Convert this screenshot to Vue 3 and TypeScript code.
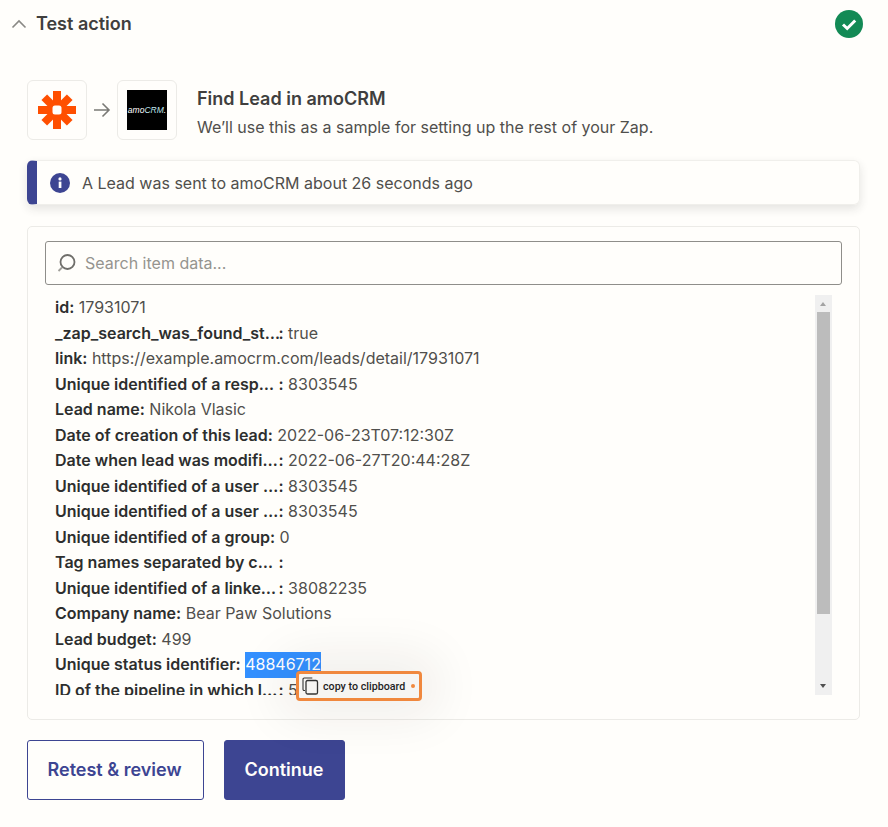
<script setup lang="ts">
interface Row { k: string; v: string; sel?: boolean; cut?: boolean }
const rows: Row[] = [
  { k: 'id', v: '17931071' },
  { k: '_zap_search_was_found_st…', v: 'true', cut: true },
  { k: 'link', v: 'https://example.amocrm.com/leads/detail/17931071' },
  { k: 'Unique identified of a resp…', v: '8303545', cut: true },
  { k: 'Lead name', v: 'Nikola Vlasic' },
  { k: 'Date of creation of this lead', v: '2022-06-23T07:12:30Z' },
  { k: 'Date when lead was modifi…', v: '2022-06-27T20:44:28Z', cut: true },
  { k: 'Unique identified of a user …', v: '8303545', cut: true },
  { k: 'Unique identified of a user …', v: '8303545', cut: true },
  { k: 'Unique identified of a group', v: '0' },
  { k: 'Tag names separated by c…', v: '', cut: true },
  { k: 'Unique identified of a linke…', v: '38082235', cut: true },
  { k: 'Company name', v: 'Bear Paw Solutions' },
  { k: 'Lead budget', v: '499' },
  { k: 'Unique status identifier', v: '48846712', sel: true },
  { k: 'ID of the pipeline in which l…', v: '5', cut: true },
]
</script>

<template>
  <div class="page">
    <header class="head">
      <svg class="chev" width="16" height="10" viewBox="0 0 16 10"><path d="M1.500 8.500 8 2l6.500 6.500" fill="none" stroke="#8a8985" stroke-width="1.600"/></svg>
      <h2 class="head-title">Test action</h2>
      <svg class="ok" width="28" height="28" viewBox="0 0 28 28"><circle cx="14" cy="14" r="14" fill="#138a55"/><path d="M8 14.500l4.200 4L20.200 10.500" fill="none" stroke="#fff" stroke-width="3"/></svg>
    </header>

    <section class="app">
      <div class="tile">
        <svg width="40" height="40" viewBox="0 0 40 40">
          <g fill="#ff4f00">
            <rect x="16" y="1" width="8" height="38" />
            <rect x="1" y="16" width="38" height="8" />
            <rect x="16" y="2" width="8" height="36" transform="rotate(45 20 20)" />
            <rect x="16" y="2" width="8" height="36" transform="rotate(-45 20 20)" />
          </g>
          <rect x="15.500" y="15.500" width="9" height="9" rx="2.500" fill="#fffefb"/>
        </svg>
      </div>
      <svg class="arrow" width="18" height="16" viewBox="0 0 18 16"><path d="M1 8h15M9.500 1.500 16 8l-6.500 6.500" fill="none" stroke="#7a7975" stroke-width="1.600"/></svg>
      <div class="tile">
        <div class="amo"><span class="amo-a">amo</span><span class="amo-b">CRM</span><span class="amo-a">.</span></div>
      </div>
      <div class="app-text">
        <div class="app-title">Find Lead in amoCRM</div>
        <div class="app-sub">We’ll use this as a sample for setting up the rest of your Zap.</div>
      </div>
    </section>

    <div class="alert">
      <svg width="20" height="20" viewBox="0 0 20 20"><circle cx="10" cy="10" r="10" fill="#3d4592"/><rect x="8.700" y="8.600" width="2.700" height="6.400" fill="#fff"/><circle cx="10" cy="5.900" r="1.600" fill="#fff"/></svg>
      <span>A Lead was sent to amoCRM about 26 seconds ago</span>
    </div>

    <section class="panel">
      <div class="search">
        <svg width="22" height="22" viewBox="0 0 22 22"><circle cx="12.500" cy="10" r="7" fill="none" stroke="#6f6e6a" stroke-width="1.800"/><path d="M7 15.500 3.500 19" stroke="#a09f9a" stroke-width="1.800" fill="none"/></svg>
        <span class="placeholder">Search item data...</span>
      </div>
      <div class="data">
        <div class="rows">
          <div v-for="(r, i) in rows" :key="i" class="row">
            <b class="key"><span :class="{ cut: r.cut }">{{ r.k }}</span>:</b>
            <span class="val">{{ ' ' }}<span :class="{ sel: r.sel }">{{ r.v }}</span></span>
          </div>
        </div>
        <div class="scrollbar">
          <span class="tri up"></span>
          <span class="thumb"></span>
          <span class="tri down"></span>
        </div>
      </div>
      <div class="copy">
        <svg width="17" height="18" viewBox="0 0 17 18"><path d="M3 13.500H2.200A1.200 1.200 0 0 1 1 12.300V2.200A1.200 1.200 0 0 1 2.200 1h8.100" fill="none" stroke="#333" stroke-width="1.100"/><rect x="4" y="3.500" width="11.500" height="13.500" rx="1.600" fill="none" stroke="#333" stroke-width="1.300"/></svg>
        <span class="copy-text">copy to clipboard</span>
        <span class="dot"></span>
      </div>
    </section>

    <div class="actions">
      <button class="btn ghost">Retest &amp; review</button>
      <button class="btn solid">Continue</button>
    </div>
  </div>
</template>

<style>
html, body { margin: 0; background: #fffefb; }
</style>

<style scoped>
.page {
  width: 888px;
  height: 827px;
  box-sizing: border-box;
  padding: 0 28px 0 27px;
  background: #fffefb;
  font-family: Inter, "Liberation Sans", sans-serif;
  color: #2d2e2e;
  overflow: hidden;
}
.head {
  height: 47px;
  display: flex;
  align-items: center;
  margin-left: -16px;
  margin-right: -3px;
}
.chev { margin-right: 9px; }
.head-title { margin: 0; font-size: 18px; font-weight: 600; color: #403f3e; flex: 1; }
.app { display: flex; align-items: center; margin-top: 33px; height: 60px; }
.tile {
  width: 60px; height: 60px; box-sizing: border-box;
  border: 1px solid #ecebe7; border-radius: 6px;
  display: flex; align-items: center; justify-content: center;
}
.arrow { margin: 0 6px; }
.amo {
  width: 40px; height: 40px; background: #000;
  display: flex; align-items: center; justify-content: center;
  font-size: 8.500px; font-style: italic; font-family: "Liberation Sans", sans-serif;
}
.amo-a { color: #fff; }
.amo-b { color: #bfe6ee; font-weight: 300; }
.app-text { margin-left: 20px; }
.app-title { font-size: 18px; font-weight: 600; line-height: 24px; color: #403f3e; margin-top: 6px; }
.app-sub { font-size: 16px; line-height: 24px; margin-top: 4px; color: #504f4c; }
.alert {
  margin-top: 20px; height: 45px; box-sizing: border-box;
  display: flex; align-items: center; gap: 12px;
  padding-left: 13px;
  border: 1px solid #f0efeb; border-left: 10px solid #3d4592; border-radius: 6px;
  box-shadow: 0 4px 10px rgba(45, 45, 40, .12);
  font-size: 16px; color: #504f4c;
}
.panel {
  position: relative;
  margin-top: 21px; height: 494px; box-sizing: border-box;
  border: 1px solid #ecebe7; border-radius: 5px;
  padding: 14px 17px 0;
}
.search {
  height: 44px; box-sizing: border-box;
  border: 1px solid #8f8e8a; border-radius: 3px;
  display: flex; align-items: center; gap: 8px; padding-left: 9px;
}
.placeholder { font-size: 16px; color: #95948f; font-weight: 400; }
.data { display: flex; margin-top: 10px; height: 400px; padding-right: 10px; }
.rows { flex: 1; height: 400px; overflow: hidden; padding-left: 10px; }
.row { height: 25.500px; line-height: 25.500px; font-size: 16px; white-space: pre; color: #504f4c; }
.key { font-weight: 600; color: #2d2e2e; }
.cut { display: inline-block; width: 223.500px; }
.sel { background: #3390ff; color: #fff; display: inline-block; line-height: 25.500px; height: 25.500px; }
.scrollbar {
  width: 17px; height: 400px; background: #f0f0f0; position: relative;
}
.thumb { position: absolute; left: 2px; top: 17px; width: 13px; height: 302px; background: #bcbcbc; }
.tri { position: absolute; left: 5px; width: 0; height: 0; border-left: 3.500px solid transparent; border-right: 3.500px solid transparent; }
.tri.up { top: 7px; border-bottom: 4px solid #a3a3a3; }
.tri.down { bottom: 7px; border-top: 4px solid #505050; }
.copy {
  position: absolute; left: 268px; top: 444px;
  width: 126px; height: 30px; box-sizing: border-box;
  border: 3px solid #f0883e; border-radius: 4px;
  background: #f6f5f3;
  display: flex; align-items: center; gap: 3px; padding-left: 3px;
  box-shadow: 0 0 50px 15px rgba(40, 35, 25, .07);
}
.copy-text { font-family: Roboto, "Liberation Sans", sans-serif; font-size: 10.700px; font-weight: 500; color: #1f1f1f; margin-left: 1px; white-space: nowrap; }
.dot { width: 4px; height: 4px; border-radius: 50%; background: #f0883e; margin-left: 3px; }
.actions { display: flex; gap: 20px; margin-top: 20px; }
.btn {
  height: 60px; box-sizing: border-box; border-radius: 3px;
  font-family: inherit; font-size: 18px; font-weight: 600; padding: 0 0 2px;
}
.ghost { width: 177px; background: transparent; border: 1px solid #3d4592; color: #3d4592; padding-right: 2px; }
.solid { width: 121px; background: #3d4592; border: 1px solid #3d4592; color: #fffefb; padding-right: 1px; }
</style>
